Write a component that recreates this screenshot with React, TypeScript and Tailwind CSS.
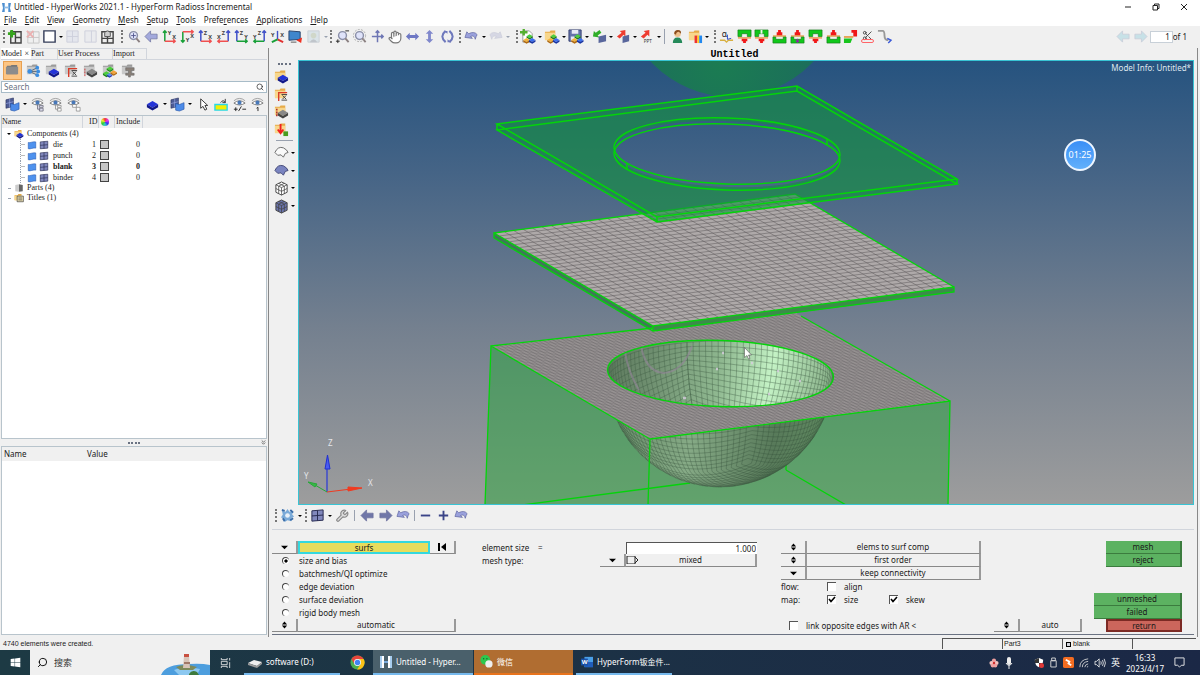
import React, { useState } from 'react';
import { FaWindows } from 'react-icons/fa';
import { LuSearch, LuHand, LuScissors, LuWrench, LuChevronsDown } from 'react-icons/lu';

type Kids = { children?: React.ReactNode };

/* ---------- small building blocks ---------- */

function Svg({ children, faded }: Kids & { faded?: boolean }) {
  return (
    <svg viewBox="0 0 16 16" className={`block h-[15px] w-[15px] overflow-visible ${faded ? 'opacity-30' : ''}`} fill="none">
      {children}
    </svg>
  );
}

function Tool({ label, children, faded }: Kids & { label: string; faded?: boolean }) {
  return (
    <button type="button" title={label} aria-label={label} className="flex shrink-0 items-center justify-center">
      <Svg faded={faded}>{children}</Svg>
    </button>
  );
}

const Caret = ({ faded }: { faded?: boolean }) => (
  <span className={`h-0 w-0 shrink-0 border-x-2 border-t-2 border-x-transparent ${faded ? 'border-t-gray-400' : 'border-t-black'}`} />
);

const Grip = () => <span className="h-[13px] shrink-0 border-l-2 border-dotted border-[#777]" />;

/* ---------- icon shapes ---------- */

const Folder = ({ gray }: { gray?: boolean }) => (
  <>
    <path d="M1 3h5l1-1.5h5V11H1z" fill={gray ? '#9b9b9b' : '#e6ab48'} />
    <path d="M1 4h11v8H1z" fill={gray ? '#c9c9c9' : '#f8d78c'} />
  </>
);

const Gem = ({ x = 0, y = 0, c = '#2434d8', d = '#11188a', s = 1 }) => (
  <g transform={`translate(${x} ${y}) scale(${s})`}>
    <path d="M0 4l5-3 5 3-5 3z" fill={c} />
    <path d="M0 4l5 3 5-3v2.5l-5 3-5-3z" fill={d} />
  </g>
);

const Trio = () => (
  <>
    <Gem x={7} y={5} s={0.65} c="#4ccf3c" d="#1c7a16" />
    <Gem x={3.5} y={9} s={0.7} c="#f4b43a" d="#b06a10" />
    <Gem x={9.5} y={9} s={0.7} c="#3b6ff0" d="#1632a0" />
  </>
);

const Sheets = () => (
  <>
    <path d="M1 3l8-2v9l-8 2z" fill="#4d5b94" stroke="#222b58" strokeWidth=".6" />
    <path d="M1 7l8-2M5 2v9" stroke="#9aa9e6" strokeWidth=".7" />
    <path d="M6 7l4 1 5-2v7l-5 2-4-1z" fill="#4d8be8" stroke="#1d4da0" strokeWidth=".6" />
  </>
);

const MeshTile = () => (
  <>
    <path d="M2 3l12-1v11L2 14z" fill="#8188bd" stroke="#24284e" />
    <path d="M8 2.5v11M2 8.5l12-1" stroke="#24284e" />
  </>
);

const Plate = () => <path d="M2 4c4 1 6-2 12-1v10c-5-1-8 2-12 1z" fill="#4f92ee" stroke="#1c4fa8" strokeWidth=".8" />;

const Scope = () => (
  <>
    <circle cx="8" cy="7" r="4.2" fill="#dfe3fa" stroke="#8a8fa8" strokeWidth="1.5" />
    <path d="M11 10l3.5 4" stroke="#8a7f80" strokeWidth="2" />
  </>
);

const Eye = () => (
  <>
    <path d="M2 6.5q6-5 12 0q-6 4-12 0z" fill="#fff" stroke="#777" />
    <circle cx="8" cy="6" r="2.2" fill="#4878b8" />
    <path d="M2 4q6-5 12 0" stroke="#888" strokeWidth=".8" />
  </>
);

const ArrowLeft = ({ c = '#a3a9dc' }) => <path d="M1 8l6-6v3.5h7v5H7V14z" fill={c} stroke="#666b98" strokeWidth=".7" />;
const ArrowRight = ({ c = '#a3a9dc' }) => <path d="M15 8L9 2v3.5H2v5h7V14z" fill={c} stroke="#666b98" strokeWidth=".7" />;
const Undo = () => <path d="M1 9l2-6 2 2q6-3 9 1l-1 2-1 3q-1-5-5-3l2 2z" fill="#9aa1dc" stroke="#5a609c" strokeWidth=".7" />;
const Redo = () => <path d="M15 9l-2-6-2 2q-6-3-9 1l1 2 1 3q1-5 5-3l-2 2z" fill="#9ba1c9" stroke="#777ca5" strokeWidth=".7" />;

interface AxesProps {
  v: string;
  h: string;
  vc: string;
  hc: string;
  flip?: boolean;
  down?: boolean;
}

function Axes({ v, h, vc, hc, flip, down }: AxesProps) {
  const x = flip ? 13 : 3;
  const y = down ? 3 : 13;
  const x2 = flip ? 2 : 14;
  const y2 = down ? 14 : 2;
  const a = flip ? 2 : -2;
  const b = down ? -2 : 2;
  return (
    <>
      <path d={`M${x} ${y}V${y2}M${x - 2} ${y2 + b}L${x} ${y2}L${x + 2} ${y2 + b}`} stroke={vc} strokeWidth="1.6" />
      <path d={`M${x} ${y}H${x2}M${x2 + a} ${y - 2}L${x2} ${y}L${x2 + a} ${y + 2}`} stroke={hc} strokeWidth="1.6" />
      <text x="6" y={down ? 14 : 6} fontSize="6" fontWeight="bold" fill="#444">{v}</text>
      <text x={flip ? 1 : 11} y={down ? 10 : 11} fontSize="6" fontWeight="bold" fill="#444">{h}</text>
    </>
  );
}

function Press({ kind }: { kind: 'top' | 'bottom' | 'split' | 'spark' | 'bend' }) {
  if (kind === 'bend') {
    return (
      <>
        <path d="M9 1h6v7h-4V4H9z" fill="#f01818" />
        <path d="M1 8.5h10" stroke="#e48a20" strokeWidth="1.5" />
        <path d="M1 10h9l-2 5H1z" fill="#19c51e" />
      </>
    );
  }
  const up = kind === 'top' || kind === 'split';
  return up ? (
    <>
      <path d="M1 1h14v7h-4V5H5v3H1z" fill="#10c81a" stroke="#167a18" strokeWidth=".7" />
      {kind === 'split' && <path d="M7 1h2v4H7z" fill="#f0f0f0" />}
      <path d="M1 9.5h14" stroke="#e48a20" strokeWidth="1.2" />
      <path d="M5 10.5h6V13H9.5v2h-3v-2H5z" fill="#f01818" />
    </>
  ) : (
    <>
      <path d="M6.5 1h3v2.500H11V7H5V3.500h1.500z" fill="#f01818" />
      <path d="M1 7.5h14" stroke="#e48a20" strokeWidth="1.2" />
      <path d="M1 8.5h3V11h8V8.500h3V15H1z" fill="#10c81a" stroke="#167a18" strokeWidth=".7" />
      {kind === 'spark' && <path d="M8 10l2 3-2 2-2-2z" fill="#8a28a0" />}
    </>
  );
}

const Cube = ({ fill = '#fff' }) => (
  <>
    <path d="M8 1l6 3v8l-6 3-6-3V4z" fill={fill} stroke="#444" />
    <path d="M2 4l6 3 6-3M8 7v8M2 8l6 3 6-3M5 2.500l6 3v8M11 2.500l-6 3v8" stroke="#444" strokeWidth=".8" />
  </>
);

const Person = () => (
  <>
    <path d="M3 15q0-6 5-6t5 6z" fill="#258a5a" />
    <circle cx="8" cy="5" r="3.5" fill="#efc08c" />
    <path d="M4.5 5q0-4 4-4t3 4l-2-2q-3 0-3 3z" fill="#8a4c1c" />
  </>
);

/* ---------- 3D scene ---------- */

type Pt = [number, number];

const lerp = (a: Pt, b: Pt, t: number): Pt => [a[0] + (b[0] - a[0]) * t, a[1] + (b[1] - a[1]) * t];

// grid lines over the quad left-back-right-front
function quadGrid(l: Pt, b: Pt, r: Pt, f: Pt, n: number) {
  let d = '';
  for (let i = 1; i < n; i++) {
    const t = i / n;
    const p = [lerp(l, b, t), lerp(f, r, t), lerp(l, f, t), lerp(b, r, t)].map(q => `${q[0].toFixed(1)} ${q[1].toFixed(1)}`);
    d += `M${p[0]}L${p[1]}M${p[2]}L${p[3]}`;
  }
  return d;
}

// mapped mesh on the lower half sphere; inside = far wall, otherwise near wall
function bowlMesh(inside: boolean) {
  const n = 28;
  const rad = Math.PI / 180;
  const az = 28 * rad;
  const faces = [
    (a: number, b: number) => [a, b, 1],
    (a: number, b: number) => [1, a, b],
    (a: number, b: number) => [-1, a, b],
    (a: number, b: number) => [a, 1, b],
    (a: number, b: number) => [a, -1, b],
  ];
  let d = '';
  faces.forEach(face => {
    for (let i = 0; i < n; i++) {
      for (let swap = 0; swap < 2; swap++) {
        let pen = false;
        for (let j = 0; j <= n; j++) {
          const u = Math.tan((-45 + (90 * i) / n) * rad);
          const w = Math.tan((-45 + (90 * j) / n) * rad);
          const [x, y, z] = swap ? face(w, u) : face(u, w);
          const len = Math.hypot(x, y, z);
          const X = (x * Math.cos(az) - y * Math.sin(az)) / len;
          const Y = (x * Math.sin(az) + y * Math.cos(az)) / len;
          const Z = z / len;
          const facing = 0.957 * Y - 0.29 * Z;
          const ok = Z >= 0 && (inside ? facing < 0 : facing >= 0);
          if (ok) {
            d += `${pen ? 'L' : 'M'}${(720 + 113 * X).toFixed(1)} ${(374 + 33 * Y + 108 * Z).toFixed(1)}`;
          }
          pen = ok;
        }
      }
    }
  });
  return d;
}

const BLANK_GRID = quadGrid([495, 233], [795, 194], [954, 287], [653, 326], 32);
const DIE_GRID = quadGrid([491, 346], [794, 312], [950, 401], [650, 439], 70);
const BOWL_IN = bowlMesh(true);
const BOWL_OUT = bowlMesh(false);

function Scene() {
  return (
    <svg viewBox="299 61 894 443" preserveAspectRatio="xMidYMid slice" className="block h-full w-full" fill="none">
      <defs>
        <linearGradient id="sky" x1="0" y1="0" x2="0" y2="1">
          <stop offset="0" stopColor="#26537f" />
          <stop offset=".25" stopColor="#456486" />
          <stop offset=".6" stopColor="#74808f" />
          <stop offset="1" stopColor="#9d9d9d" />
        </linearGradient>
        <linearGradient id="inner" x1="608" y1="350" x2="833" y2="390" gradientUnits="userSpaceOnUse">
          <stop offset="0" stopColor="#5c785c" />
          <stop offset=".2" stopColor="#6f8f70" />
          <stop offset=".5" stopColor="#8fb890" />
          <stop offset=".72" stopColor="#c4f2c5" />
          <stop offset="1" stopColor="#86ad86" />
        </linearGradient>
        <linearGradient id="outer" x1="620" y1="420" x2="825" y2="450" gradientUnits="userSpaceOnUse">
          <stop offset="0" stopColor="#6b906c" />
          <stop offset=".35" stopColor="#86aa86" />
          <stop offset=".75" stopColor="#587a5a" />
          <stop offset="1" stopColor="#5f8a60" />
        </linearGradient>
        <radialGradient id="punch" cx=".45" cy=".85" r=".5">
          <stop offset="0" stopColor="#1b7c52" />
          <stop offset="1" stopColor="#1c6b5c" />
        </radialGradient>
        <clipPath id="mouth"><ellipse cx="720.5" cy="373.5" rx="113" ry="33" transform="rotate(2 720.5 373.5)" /></clipPath>
        <clipPath id="below"><path d="M491 346L650 439L950 401V510H491z" /></clipPath>
      </defs>
      <rect x="0" y="0" width="1500" height="700" fill="#26537f" />
      <rect x="0" y="61" width="1500" height="444" fill="url(#sky)" />

      <circle cx="732" cy="-14" r="111" fill="url(#punch)" />

      {/* blank */}
      <path d="M494 233L653 326L954 287V292L653 331L494 238z" fill="#3d7a55" />
      <path d="M494 233L795 194L954 287L653 326z" fill="#aea9a9" />
      <path d={BLANK_GRID} stroke="#5b5759" strokeWidth=".5" />

      {/* die */}
      <path d="M491 346L650 439L950 401L948 505H485z" fill="#28a83c" fillOpacity=".5" />
      <path d="M522 505L690 483M786 470L846 505M786 465V470" stroke="#04d40a" strokeWidth="1.3" />
      <g clipPath="url(#below)">
        <circle cx="720" cy="374" r="113" fill="url(#outer)" />
        <path d={BOWL_OUT} stroke="#34503a" strokeWidth=".5" strokeOpacity=".65" />
      </g>
      <path d="M491 346L794 312L950 401L650 439z" fill="#a09b9b" />
      <path d={DIE_GRID} stroke="#5c595b" strokeWidth=".5" strokeOpacity=".7" />
      <g clipPath="url(#mouth)">
        <rect x="600" y="330" width="240" height="90" fill="url(#inner)" />
        <path d={BOWL_IN} stroke="#3e5a42" strokeWidth=".5" strokeOpacity=".75" />
        <path d="M641 345q4 26 22 28q20-1 29-27M625 352q3 20 14 38" stroke="#94869a" strokeWidth="2" strokeOpacity=".6" />
        <path d="M722 353h2M751 363h2M777 371h2M768 394h2M799 381h2M683 398h3M716 369h2" stroke="#d8cde0" strokeWidth="2.5" strokeOpacity=".8" />
      </g>
      <ellipse cx="720.5" cy="373.5" rx="113" ry="33" transform="rotate(2 720.5 373.5)" stroke="#04d40a" strokeWidth="1.3" />
      <path d="M485 505L491 346L650 439L648 505M650 439L950 401L948 505M491 346L653 328M801 316L950 401" stroke="#04d40a" strokeWidth="1.3" />

      {/* blank edges lie over the die */}
      <path d="M653 326L954 287V292L653 331z" fill="#3d8a4b" />
      <path d="M494 233L653 326L954 287V292L653 331L494 238zM494 233L795 194L954 287M653 326V331" stroke="#04d40a" strokeWidth="1.3" />

      {/* binder */}
      <path
        fillRule="evenodd"
        d="M497 124L797 86L957 179V184L657 222L497 130zM614 151a113 33 2 1 0 226 6a113 33 2 1 0 -226 -6z"
        fill="#14923f"
        fillOpacity=".62"
      />
      <path d="M497 124L797 86L957 179L657 217zM497 130L797 91L957 184L657 222zM497 124V130M797 86V91M957 179V184M657 217V222M627 164V169M827 139V145" stroke="#04d40a" strokeWidth="1.5" />
      <ellipse cx="727" cy="151" rx="113" ry="33" transform="rotate(2 727 151)" stroke="#04d40a" strokeWidth="1.5" />
      <ellipse cx="727" cy="157" rx="113" ry="33" transform="rotate(2 727 157)" stroke="#04d40a" strokeWidth="1.5" />

      {/* axis triad */}
      <path d="M327 492V460" stroke="#2838d8" strokeWidth="1.2" />
      <path d="M327.5 455l-2.5 14h5z" fill="#4a5cf0" stroke="#2030d0" />
      <path d="M327 492l24-3" stroke="#f03a20" />
      <path d="M362 488l-14-1v4z" fill="#f03a20" stroke="#f03a20" />
      <path d="M327 492l-12-7" stroke="#28a838" />
      <path d="M308 482l9 2-2 3z" fill="#38b848" stroke="#28a838" />
      <g fill="#e4e6ea" fontSize="8" fontFamily="Noto Sans, sans-serif">
        <text x="328" y="446">Z</text>
        <text x="304" y="479">Y</text>
        <text x="368" y="486">X</text>
      </g>

      {/* mouse pointer */}
      <path d="M744.5 347.5v10l2.500-2 1.500 3.500 1.500-.6-1.500-3.400h3z" fill="#fff" stroke="#555" strokeWidth=".6" />
    </svg>
  );
}

/* ---------- window head ---------- */

const MENUS: [string, string, string][] = [
  ['', 'F', 'ile'],
  ['', 'E', 'dit'],
  ['', 'V', 'iew'],
  ['', 'G', 'eometry'],
  ['', 'M', 'esh'],
  ['', 'S', 'etup'],
  ['', 'T', 'ools'],
  ['Prefe', 'r', 'ences'],
  ['', 'A', 'pplications'],
  ['', 'H', 'elp'],
];

function WindowHead() {
  return (
    <header className="bg-white">
      <div className="flex h-[14px] items-center pl-[2px]">
        <svg viewBox="0 0 10 10" className="mr-[3px] h-[9px] w-[9px]">
          <path d="M0 0h3q0 5 0 10H0q2-5 0-10z" fill="#4c8ed0" />
          <path d="M10 0H7q0 5 0 10h3q-2-5 0-10z" fill="#4c8ed0" />
          <path d="M2 4h6v2H2z" fill="#8fbce6" />
        </svg>
        <h1>Untitled - HyperWorks 2021.1 - HyperForm Radioss Incremental</h1>
        <div className="ml-auto flex gap-[20px] pr-[12px]">
          <button type="button" aria-label="Minimize">
            <svg viewBox="0 0 8 8" className="h-[8px] w-[8px]"><path d="M1 4h6" stroke="#222" /></svg>
          </button>
          <button type="button" aria-label="Restore">
            <svg viewBox="0 0 8 8" className="h-[8px] w-[8px]" fill="none" stroke="#222"><path d="M1 2.500h4.500V7H1zM2.500 2.500v-1.500h4.500v4.500h-1.500" /></svg>
          </button>
          <button type="button" aria-label="Close">
            <svg viewBox="0 0 8 8" className="h-[8px] w-[8px]" stroke="#222"><path d="M1 1l6 6M7 1l-6 6" /></svg>
          </button>
        </div>
      </div>
      <nav className="flex h-[12px] items-center gap-[8px] pl-[4px]">
        {MENUS.map(([pre, key, post]) => (
          <button type="button" key={key + post}>
            {pre}<span className="underline">{key}</span>{post}
          </button>
        ))}
      </nav>
    </header>
  );
}

function TopToolbar() {
  return (
    <div className="flex h-[22px] items-center pb-px">
      <div className="flex w-[115px] items-center justify-between pl-[3px]">
        <Grip />
        <Tool label="New page"><path d="M4 3h11v12H4zM9 9h6M9 3v12" fill="#eee" stroke="#444" strokeWidth="1.5" /><path d="M5 1v8M1 5h8" stroke="#35a51c" strokeWidth="3" /></Tool>
        <Tool label="Delete page" faded><path d="M3 3h12v12H3zM9 3v12M3 9h12" stroke="#666" /><path d="M2 2l7 7M9 2L2 9" stroke="#e02020" strokeWidth="2" /></Tool>
        <Tool label="Page layout"><path d="M2 2h12v12H2z" fill="#fff" stroke="#333c58" strokeWidth="1.5" /></Tool>
        <Caret />
        <Tool label="Swap" faded><path d="M2 2h12v12H2zM8 2v12M2 8h12" fill="#c9d0e8" stroke="#8088b0" /></Tool>
        <Tool label="Expand" faded><path d="M2 2h12v12H2zM9 2v12" fill="#dde0ea" stroke="#8088b0" /></Tool>
        <Tool label="Sync"><path d="M2 3h12v12H2zM8 3v12M2 10h12" fill="#eee" stroke="#444" strokeWidth="1.5" /><path d="M5 8V4q3-4 6 0v4z" fill="#ccc" stroke="#555" /></Tool>
      </div>
      <div className="ml-[6px] flex w-[207px] items-center justify-between">
        <Grip />
        <Tool label="Fit"><Scope /><path d="M8 4.500v5M5.500 7h5" stroke="#555a90" /></Tool>
        <Tool label="Previous view"><ArrowLeft /></Tool>
        <Tool label="XY top"><Axes v="Y" h="X" vc="#18a038" hc="#f05050" /></Tool>
        <Tool label="XY bottom"><Axes v="Y" h="X" vc="#18a038" hc="#f05050" down /></Tool>
        <Tool label="XZ left"><Axes v="Z" h="X" vc="#4050c8" hc="#f05050" /></Tool>
        <Tool label="XZ right"><Axes v="Z" h="X" vc="#4050c8" hc="#f05050" flip /></Tool>
        <Tool label="YZ front"><Axes v="Z" h="Y" vc="#4050c8" hc="#18a038" /></Tool>
        <Tool label="YZ rear"><Axes v="Z" h="Y" vc="#4050c8" hc="#18a038" flip /></Tool>
        <Tool label="Isometric">
          <path d="M8 11V2" stroke="#4050c8" strokeWidth="1.5" />
          <path d="M8 11l6 3" stroke="#e03030" strokeWidth="2" />
          <path d="M8 11l-6 3" stroke="#18a038" strokeWidth="2" />
          <text x="1" y="9" fontSize="6" fontWeight="bold" fill="#444">Y</text>
          <text x="11" y="9" fontSize="6" fontWeight="bold" fill="#444">X</text>
        </Tool>
        <Tool label="Screen"><path d="M1 2l12 1v8L1 12z" fill="#3f86cc" stroke="#27416a" /><path d="M15 9l-6 3 5 3z" fill="#f03020" /><path d="M3 14h6" stroke="#555" /></Tool>
        <Tool label="Image" faded><path d="M2 2h12v12H2z" fill="#a8c8d8" stroke="#789" /><circle cx="8" cy="7" r="3" fill="#88a070" /><path d="M4 14q4-6 8 0z" fill="#567" /></Tool>
        <Caret faded />
      </div>
      <div className="flex w-[127px] items-center justify-between pl-[2px]">
        <Grip />
        <Tool label="Zoom in out"><Scope /><path d="M1 13h4M3 11v4M11 2h4" stroke="#222" /></Tool>
        <Tool label="Circle zoom"><Scope /><circle cx="8" cy="7" r="6.5" stroke="#aaa" strokeDasharray="2 1.5" /></Tool>
        <Tool label="Centre"><path d="M8 2v12M2 8h12M6 4l2-2 2 2M12 6l2 2-2 2" stroke="#6e76b4" strokeWidth="1.6" /></Tool>
        <button type="button" aria-label="Pan" className="text-[14px] text-[#777]"><LuHand fill="#fff" /></button>
        <Tool label="Rotate left right"><path d="M1 8l4-4v2.500h6V4l4 4-4 4V9.500H5V12z" fill="#6e78c4" /></Tool>
        <Tool label="Rotate up down"><path d="M8 1l4 4H9.500v6H12l-4 4-4-4h2.500V5H4z" fill="#8088cc" /></Tool>
        <Tool label="Spin"><path d="M6 2q-7 6 0 12M10 14q7-6 0-12" stroke="#6e78bc" strokeWidth="2.2" /><path d="M4 2h4v3zM12 14H8v-3z" fill="#6e78bc" /></Tool>
      </div>
      <div className="ml-[4px] flex w-[51px] items-center justify-between">
        <Grip />
        <Tool label="Undo"><Undo /></Tool>
        <Caret />
        <Tool label="Redo" faded><Redo /></Tool>
        <Caret faded />
      </div>
      <div className="ml-[6px] flex w-[145px] items-center justify-between">
        <Grip />
        <Tool label="New model"><path d="M3 2h7l3 3v9H3z" fill="#fff" stroke="#999" /><path d="M4 0v7M0 3.500h8" stroke="#55b030" strokeWidth="2.5" /><Trio /></Tool>
        <Caret />
        <Tool label="Open model"><Folder /><Trio /></Tool>
        <Caret />
        <Tool label="Save model"><path d="M1 1h13v12H1z" fill="#6573aa" stroke="#333f70" /><path d="M4 1h7v4H4zM3 8h9v5H3z" fill="#e6e9f5" /><Trio /></Tool>
        <Caret />
        <Tool label="Import"><path d="M1 8l1-6 2 2 4-3 2 3-4 3 2 2z" fill="#2fae28" /><path d="M7 8l8-2v7l-8 2z" fill="#59669c" /></Tool>
        <Caret />
        <Tool label="Export"><path d="M10 1L4 2l2 2-5 4 3 2 4-4 2 2z" fill="#ee3c30" /><path d="M7 8l7-2v7l-7 2z" fill="#59669c" /></Tool>
        <Caret />
        <Tool label="Export PPT"><path d="M11 1L5 2l2 2-5 4 3 2 4-4 2 2z" fill="#ee3c30" /><text x="5" y="15" fontSize="5" fill="#333">PPT</text></Tool>
        <Caret />
      </div>
      <div className="ml-[3px] flex w-[45px] items-center justify-between border-l border-gray-400 pl-[5px]">
        <Tool label="User profile"><Person /></Tool>
        <Tool label="Load results"><Folder /><path d="M7 7h3v8H7z" fill="#e33" /><path d="M10 7h2v8h-2z" fill="#fc2" /><path d="M12 7h3v8h-3z" fill="#28e" /></Tool>
        <Caret />
      </div>
      <div className="ml-[5px] flex w-[178px] items-center justify-between">
        <Grip />
        <Tool label="Punch angle"><text x="3" y="8" fontSize="9" fill="#222">α</text><path d="M1 12h5l2 2 2-2h5" stroke="#d8b040" strokeWidth="1.5" /><path d="M9 6v5l4-1" stroke="#2848c8" /></Tool>
        <Tool label="Single action"><Press kind="top" /></Tool>
        <Tool label="Single action split"><Press kind="split" /></Tool>
        <Tool label="Double action"><Press kind="bottom" /></Tool>
        <Tool label="Double action spark"><Press kind="spark" /></Tool>
        <Tool label="Draw"><Press kind="top" /></Tool>
        <Tool label="Form"><Press kind="bottom" /></Tool>
        <Tool label="Bend"><Press kind="bend" /></Tool>
        <button type="button" aria-label="Trim" className="flex flex-col items-center text-[11px] text-[#444]">
          <LuScissors />
          <span className="-mt-[2px] h-[4px] w-[13px] rounded-full border border-red-400" />
        </button>
        <Tool label="Springback"><path d="M1 2h5q2 0 2 5t4 5" stroke="#999" strokeWidth="2" /><path d="M11 10l4 2-3 3" stroke="#3858d8" strokeWidth="1.5" /></Tool>
      </div>
      <div className="ml-auto flex items-center gap-[2px] pr-[13px]">
        <Tool label="Previous page" faded><ArrowLeft c="#6cc0d4" /></Tool>
        <Tool label="Next page" faded><ArrowRight c="#6cc0d4" /></Tool>
        <span className="flex items-center">
          <input aria-label="Page" defaultValue="1" className="h-[12px] w-[23px] border border-[#c8d0d8] bg-white pr-[2px] text-right" />
          of 1
        </span>
      </div>
    </div>
  );
}

/* ---------- model browser ---------- */

interface Comp {
  id: number;
  name: string;
  bold?: boolean;
}

const COMPONENTS: Comp[] = [
  { id: 1, name: 'die' },
  { id: 2, name: 'punch' },
  { id: 3, name: 'blank', bold: true },
  { id: 4, name: 'binder' },
];

const TreeIcon = ({ children }: Kids) => (
  <svg viewBox="0 0 16 16" className="block h-[10px] w-[10px] shrink-0" fill="none">{children}</svg>
);

function ModelTree() {
  return (
    <div className="min-h-0 flex-1 border border-[#b8c4cc] bg-white font-['Liberation_Serif',serif]">
      <table className="w-full table-fixed border-collapse text-left">
        <thead>
          <tr className="h-[12px] bg-[#f0f0f0]">
            <th className="w-[80px] border-r border-gray-300 font-normal">Name</th>
            <th className="w-[16px] border-r border-gray-300 text-right font-normal">ID</th>
            <th className="w-[16px] border-r border-gray-300" aria-label="Color">
              <span className="ml-[2px] block h-[8px] w-[8px] rounded-full bg-[conic-gradient(#e33,#e3e,#33e,#3cc,#3c3,#ee3,#e33)]" />
            </th>
            <th className="w-[28px] border-r border-gray-300 text-center font-normal">Include</th>
            <th />
          </tr>
        </thead>
        <tbody>
          <tr className="h-[11px]">
            <td colSpan={5}>
              <div className="flex items-center gap-[3px] pl-[5px]">
                <Caret />
                <TreeIcon><Folder /><Gem x={4} y={5} s={1.1} /></TreeIcon>
                Components (4)
              </div>
            </td>
          </tr>
          {COMPONENTS.map(c => (
            <tr key={c.id} className={`h-[11px] ${c.bold ? 'font-bold' : ''}`}>
              <td>
                <div className="flex items-center gap-[2px] pl-[18px]">
                  <span className="h-[11px] w-[5px] border-l border-dotted border-gray-400 bg-[linear-gradient(#bbb,#bbb)] bg-[length:5px_1px] bg-center bg-no-repeat" />
                  <TreeIcon><Plate /></TreeIcon>
                  <TreeIcon><MeshTile /></TreeIcon>
                  <span className="ml-[2px]">{c.name}</span>
                </div>
              </td>
              <td className="pr-[2px] text-right">{c.id}</td>
              <td><span className="ml-[2px] block h-[9px] w-[9px] border border-[#444] bg-[#c6c6c6]" /></td>
              <td className="pr-[2px] text-right">0</td>
              <td />
            </tr>
          ))}
          <tr className="h-[10px]">
            <td colSpan={5}>
              <div className="flex items-center gap-[3px] pl-[6px]">
                <span className="w-[3px] border-t border-gray-400" />
                <TreeIcon><path d="M2 3l6-1v12l-6-1z" fill="#ccc" /><path d="M8 2l6 1v10l-6 1z" fill="#666" /></TreeIcon>
                Parts (4)
              </div>
            </td>
          </tr>
          <tr className="h-[10px]">
            <td colSpan={5}>
              <div className="flex items-center gap-[3px] pl-[6px]">
                <span className="w-[3px] border-t border-gray-400" />
                <TreeIcon><Folder /><path d="M5 5h10v9H5z" fill="#e8dcb0" stroke="#333" /><path d="M7 8h6M7 11h6" stroke="#333" /></TreeIcon>
                Titles (1)
              </div>
            </td>
          </tr>
        </tbody>
      </table>
    </div>
  );
}

function Browser() {
  const [search, setSearch] = useState('');

  return (
    <aside className="flex w-[268px] shrink-0 flex-col pr-px pl-px">
      <div className="flex h-[11px] items-center font-['Liberation_Serif',serif]">
        <button type="button" className="flex h-full w-[30px] items-center justify-between bg-white pr-[2px]">
          Model <span>×</span>
        </button>
        <button type="button" className="h-full w-[26px] border-t border-gray-300 text-left">Part</button>
        <button type="button" className="h-full w-[55px] border-t border-l border-gray-300 text-left">User Process</button>
        <button type="button" className="h-full w-[35px] border-t border-x border-gray-300 text-left">Import</button>
      </div>
      <div className="flex h-[21px] items-center gap-[4px] border-t border-gray-300 pl-[2px]">
        <span className="border border-[#e8a050] bg-[#fdc583] p-px"><Tool label="Model view"><path d="M2 3h4l1-1h6v10H2z" fill="#777" /><path d="M1 4h13v8H1z" fill="#8c8c8c" /></Tool></span>
        <Tool label="Hierarchy"><Folder gray /><path d="M4 9l8-4M4 9l8 4M4 9h8" stroke="#567" /><circle cx="4" cy="9" r="2.5" fill="#3b8de0" /><circle cx="12" cy="5" r="2" fill="#3b8de0" /><circle cx="13" cy="9" r="2" fill="#3b8de0" /><circle cx="12" cy="13" r="2" fill="#3b8de0" /></Tool>
        <Tool label="Components"><Folder gray /><Gem x={4} y={5} s={1.1} /></Tool>
        <Tool label="Properties"><Folder gray /><path d="M5 15V6h9M5 6v3" stroke="#d83c28" strokeWidth="1.5" /><path d="M8 8h6M8 14h6M9 9l4 4M13 9l-4 4" stroke="#444" /></Tool>
        <Tool label="Materials"><Folder gray /><Gem x={4} y={5} s={1.1} c="#888" d="#444" /><path d="M2 6v8" stroke="#c33" strokeDasharray="2 1" /></Tool>
        <Tool label="Assemblies"><Folder gray /><Gem x={5} y={3} s={0.7} c="#4ccf3c" d="#1c8a16" /><Gem x={1} y={8} s={0.75} c="#4ccf3c" d="#1c8a16" /><Gem x={5} y={10} s={0.6} c="#5b8ff0" d="#2434b8" /><Gem x={9} y={7} s={0.7} c="#f4a43a" d="#b06a10" /></Tool>
        <Tool label="Load collectors"><Folder gray /><path d="M5 5h9v3h-3v3h3v2H10v2H8v-2H5v-2h3V8H5z" fill="#8a8078" stroke="#666" strokeWidth=".6" /></Tool>
      </div>
      <label className="mt-px flex h-[12px] items-center border border-[#a8bcc8] bg-white px-[2px]">
        <input
          type="text"
          aria-label="Search"
          placeholder="Search"
          value={search}
          onChange={e => setSearch(e.target.value)}
          className="min-w-0 flex-1 placeholder:text-gray-500 focus:outline-none"
        />
        <LuSearch className="text-[8px]" />
      </label>
      <div className="flex h-[22px] items-center">
        <div className="flex w-[80px] items-center justify-between pl-[4px]">
          <Tool label="Sheets"><Sheets /></Tool>
          <Caret />
          <Tool label="Show"><Eye /><path d="M8 8v5h3M10 9h4v2h-4zM10 12h4v3h-4z" fill="#dde" stroke="#667" strokeWidth=".8" /></Tool>
          <Tool label="Hide"><Eye /><path d="M8 8v5h3M10 9h4v2h-4zM10 12h4v3h-4z" fill="#fff" stroke="#888" strokeWidth=".8" /></Tool>
          <Tool label="Isolate"><Eye /><path d="M7 8h4v3H7zM11 11h4v4h-4z" fill="#fff" stroke="#888" strokeWidth=".8" /></Tool>
        </div>
        <div className="ml-auto flex w-[122px] items-center justify-between pr-[2px]">
          <Tool label="Component"><Gem x={2} y={3} s={1.2} /></Tool>
          <Caret />
          <Tool label="Surfaces"><Sheets /></Tool>
          <Caret />
          <Tool label="Select"><path d="M5 2v10l2.500-2 2 4 2-1-2-4h3z" fill="#fff" stroke="#333" /></Tool>
          <Tool label="Highlight"><path d="M1 8h13v6H1z" fill="#f6f000" stroke="#28d8e8" strokeWidth="1.5" /><path d="M7 6q3-4 5 0M12 2v4H9" stroke="#333" /></Tool>
          <Tool label="Add remove"><Eye /><path d="M2 13h4M4 11v4M10 10l-3 5M11 13h4" stroke="#222" /></Tool>
          <Tool label="Show one"><Eye /><path d="M7 12l1.500-1V15" stroke="#222" /></Tool>
        </div>
      </div>
      <ModelTree />
      <div className="grid h-[7px] grid-cols-3 items-center">
        <span className="col-start-2 w-[12px] justify-self-center border-t-2 border-dotted border-gray-500" />
        <LuChevronsDown className="justify-self-end text-[7px]" />
      </div>
      <div className="mb-[2px] h-[189px] border border-[#b8c4cc] bg-white">
        <div className="flex h-[14px] items-center bg-[#f0f0f0] pl-[2px]">
          <span className="w-[83px]">Name</span>
          <span>Value</span>
        </div>
      </div>
    </aside>
  );
}

/* ---------- graphics area ---------- */

function SideTools() {
  return (
    <div className="flex w-[26px] shrink-0 flex-col pl-[2px]">
      <span className="mt-[3px] mb-[4px] ml-[4px] w-[13px] border-t-2 border-dotted border-gray-500" />
      <div className="flex h-[68px] flex-col items-start justify-between">
        <Tool label="Components"><Folder /><Gem x={4} y={5} s={1.1} /></Tool>
        <Tool label="Properties"><Folder /><path d="M5 15V6h9" stroke="#d83c28" strokeWidth="1.5" /><path d="M8 8h6M8 14h6M9 9l4 4M13 9l-4 4" stroke="#444" /></Tool>
        <Tool label="Materials"><Folder /><Gem x={4} y={5} s={1.1} c="#888" d="#444" /><path d="M3 5v9" stroke="#a22" strokeDasharray="2 1" strokeWidth="1.5" /></Tool>
        <Tool label="Organize"><Folder /><path d="M7 2v9M4 8l3 4 3-4" stroke="#f02020" strokeWidth="2" /><path d="M10 10h5v5h-5z" fill="#4a9c20" /></Tool>
      </div>
      <hr className="my-[3px] ml-[2px] w-[17px] border-gray-400" />
      <div className="flex h-[71px] flex-col justify-around">
        <div className="flex items-center gap-[2px]"><Tool label="Wireframe geometry"><path d="M1 8q3-7 9-5q4 2 5 5l-3 1-2 4q-2-4-6-2z" fill="#fafafa" stroke="#666" /></Tool><Caret /></div>
        <div className="flex items-center gap-[2px]"><Tool label="Shaded geometry"><path d="M1 8q3-7 9-5q4 2 5 5l-3 1-2 4q-2-4-6-2z" fill="#7a84c0" stroke="#444a78" /></Tool><Caret /></div>
        <div className="flex items-center gap-[2px]"><Tool label="Wireframe elements"><Cube /></Tool><Caret /></div>
        <div className="flex items-center gap-[2px]"><Tool label="Shaded elements"><Cube fill="#6a74ac" /></Tool><Caret /></div>
      </div>
    </div>
  );
}

function BottomTools() {
  return (
    <div className="flex h-[24px] shrink-0 items-center gap-[3px] pb-[3px] pl-[3px]">
      <Grip />
      <Tool label="Visualization">
        <path d="M8 1l2 3 4-1-1 4 2 2-3 2v3l-4-1-3 2-1-4-3-1 2-3-1-4 4 1z" fill="#7aaad8" />
        <path d="M2 2l3 1M11 2l3 3M3 11l2 3M11 13l3-2" stroke="#3a6ca8" strokeWidth="2" />
        <circle cx="8" cy="8" r="2.5" fill="#e8f0f8" />
      </Tool>
      <Caret />
      <Grip />
      <Tool label="Mesh lines"><MeshTile /></Tool>
      <Caret />
      <button type="button" aria-label="Options" className="text-[14px] text-[#888]"><LuWrench fill="#ddd" /></button>
      <span className="mx-[2px] h-[11px] border-l border-gray-400" />
      <Tool label="Back"><ArrowLeft c="#7077a8" /></Tool>
      <Tool label="Forward"><ArrowRight c="#7077a8" /></Tool>
      <Tool label="Reset view"><Undo /></Tool>
      <span className="h-[11px] border-l border-gray-400" />
      <Tool label="Less"><path d="M3 8h10" stroke="#3a4488" strokeWidth="2" /></Tool>
      <Tool label="More"><path d="M3 8h10M8 3v10" stroke="#3a4488" strokeWidth="2" /></Tool>
      <Tool label="Restore"><Undo /></Tool>
    </div>
  );
}

/* ---------- automesh panel ---------- */

const raised = 'flex h-[13px] items-center justify-center border-r-2 border-b border-r-[#999] border-b-[#888] bg-[#f0f0f0]';

const DownBtn = ({ label }: { label: string }) => (
  <button type="button" aria-label={label} className={`${raised} w-[26px] shrink-0`}>
    <svg viewBox="0 0 8 8" className="h-[7px] w-[7px]"><path d="M0 2h8L4 6z" /></svg>
  </button>
);

const ToggleBtn = ({ label }: { label: string }) => (
  <button type="button" aria-label={label} className={`${raised} w-[26px] shrink-0`}>
    <svg viewBox="0 0 8 8" className="h-[8px] w-[7px]"><path d="M1 3.500L4 0l3 3.500zM1 4.500h6L4 8z" /></svg>
  </button>
);

function Check({ label, on }: { label: string; on?: boolean }) {
  return (
    <label className="flex h-[13px] items-center gap-[8px]">
      <span className="relative block h-[9px] w-[9px]">
        <input type="checkbox" defaultChecked={on} className="peer block h-[9px] w-[9px] appearance-none border-t border-l border-[#555] bg-white" />
        <svg viewBox="0 0 9 9" className="pointer-events-none absolute inset-0 hidden peer-checked:block" fill="none">
          <path d="M2 4l2 2.500L8 2" stroke="#000" strokeWidth="1.6" />
        </svg>
      </span>
      {label}
    </label>
  );
}

const MODES = ['size and bias', 'batchmesh/QI optimize', 'edge deviation', 'surface deviation', 'rigid body mesh'];

function MeshPanel() {
  const [mode, setMode] = useState(MODES[0]);
  const green = 'h-[13px] border-r-2 border-b border-[#3b7c3e] bg-[#5cb261] text-center';

  return (
    <section className="mr-[3px] flex shrink-0 border-t border-b border-t-gray-300 border-b-gray-500 pt-[11px] pb-[2px]">
      <div className="w-[184px] shrink-0">
        <div className="flex">
          <DownBtn label="Entity type" />
          <button type="button" className="h-[13px] flex-1 border-2 border-[#35d8de] bg-[#e8dc5c] leading-[9px]">surfs</button>
          <button type="button" aria-label="Reset selection" className={`${raised} w-[26px]`}>
            <svg viewBox="0 0 8 8" className="h-[8px] w-[8px]"><path d="M0 0h2v8H0zM8 0v8L3 4z" /></svg>
          </button>
        </div>
        {MODES.map(m => (
          <label key={m} className="flex h-[13px] items-center gap-[10px] pl-[10px]">
            <input
              type="radio"
              name="mode"
              checked={mode === m}
              onChange={() => setMode(m)}
              className="h-[7px] w-[7px] appearance-none rounded-full border-t border-l border-[#444] bg-white checked:bg-[radial-gradient(#000_35%,#fff_40%)]"
            />
            {m}
          </label>
        ))}
        <div className="flex">
          <ToggleBtn label="Mesh mode" />
          <button type="button" className={`${raised} flex-1`}>automatic</button>
        </div>
      </div>

      <div className="ml-[26px] w-[275px] shrink-0">
        <div className="flex h-[13px] items-center">
          <label htmlFor="size" className="w-[56px]">element size</label>
          <span>=</span>
          <input id="size" defaultValue="1.000" className="ml-auto h-[12px] w-[131px] border-t border-l border-[#555] bg-white pr-px text-right" />
        </div>
        <div className="flex h-[13px] items-center">
          <span>mesh type:</span>
          <div className="ml-auto flex w-[157px]">
            <DownBtn label="Mesh type" />
            <button type="button" className={`${raised} flex-1`}>
              <svg viewBox="0 0 14 8" className="h-[8px] w-[14px]" fill="none" stroke="#222"><path d="M1 0h8v8H1zM9 1l3 3-3 3" /></svg>
              <span className="flex-1 pr-[14px]">mixed</span>
            </button>
          </div>
        </div>
      </div>

      <div className="ml-[24px] w-[301px] shrink-0">
        <div className="w-[200px]">
          <div className="flex"><ToggleBtn label="Destination" /><button type="button" className={`${raised} flex-1`}>elems to surf comp</button></div>
          <div className="flex"><ToggleBtn label="Order" /><button type="button" className={`${raised} flex-1`}>first order</button></div>
          <div className="flex"><DownBtn label="Connectivity" /><button type="button" className={`${raised} flex-1`}>keep connectivity</button></div>
        </div>
        <div className="flex h-[13px] items-center">
          <span className="w-[46px]">flow:</span>
          <Check label="align" />
        </div>
        <div className="flex h-[13px] items-center">
          <span className="w-[46px]">map:</span>
          <span className="w-[62px]"><Check label="size" on /></span>
          <Check label="skew" on />
        </div>
        <div className="mt-[13px] flex h-[13px] items-center pl-[8px]">
          <Check label="link opposite edges with AR <" />
          <div className="ml-auto flex w-[88px]">
            <ToggleBtn label="Ratio" />
            <button type="button" className={`${raised} flex-1`}>auto</button>
          </div>
        </div>
      </div>

      <div className="mr-[12px] ml-auto flex w-[88px] flex-col items-end">
        <button type="button" className={`${green} w-[76px]`}>mesh</button>
        <button type="button" className={`${green} w-[76px]`}>reject</button>
        <button type="button" className={`${green} mt-[26px] w-full`}>unmeshed</button>
        <button type="button" className={`${green} w-full`}>failed</button>
        <button type="button" className="h-[13px] w-[76px] border-2 border-[#7c2a24] bg-[#cc665c] text-center leading-[9px]">return</button>
      </div>
    </section>
  );
}

/* ---------- bottom bars ---------- */

function StatusBar() {
  const cell = 'h-[11px] border-t border-l border-[#555] pl-px';
  return (
    <div className="flex h-[13px] shrink-0 items-center pl-[3px] font-['Liberation_Sans',sans-serif] text-[7px]">
      <span>4740 elements were created.</span>
      <div className="ml-auto flex pr-[4px]">
        <span className={`${cell} w-[60px]`} />
        <span className={`${cell} w-[60px]`}>Part3</span>
        <span className={`${cell} flex w-[70px] items-center gap-[2px]`}><i className="ml-[2px] h-[5px] w-[5px] border border-black bg-gray-300" />blank</span>
        <span className={`${cell} w-[64px]`} />
      </div>
    </div>
  );
}

function Taskbar() {
  return (
    <footer className="flex h-[25px] shrink-0 items-stretch bg-linear-to-r from-[#1d3a44] to-[#1b2846] text-white">
      <button type="button" aria-label="Start" className="flex w-[30px] items-center justify-center text-[11px]"><FaWindows /></button>
      <label className="flex w-[180px] items-center bg-[#f0f0f0] pl-[7px] text-black">
        <LuSearch className="-scale-x-100 text-[11px]" />
        <input aria-label="搜索" placeholder="搜索" className="ml-[6px] w-[90px] text-[9px] placeholder:text-[#333] focus:outline-none" />
        <svg viewBox="0 0 50 25" className="ml-auto h-[25px] w-[50px]">
          <path d="M1 25q4-11 28-11 12-1 21 1v10z" fill="#4d9ede" />
          <path d="M14 20q10-5 26-1l-3 6H19z" fill="#8cc8f0" />
          <path d="M16 17q9-4 21 0l-4 3H20z" fill="#7d8a5a" />
          <path d="M29 24q3-5 8-2l2 3h-10z" fill="#3d7a3c" />
          <path d="M24 6h5l1 12h-7z" fill="#d8c4b8" />
          <path d="M24 4h5v3h-5z" fill="#c85040" />
          <path d="M24 12h6v2h-6z" fill="#a07868" />
        </svg>
      </label>
      <button type="button" aria-label="Task view" className="flex w-[30px] items-center justify-center">
        <svg viewBox="0 0 12 12" className="h-[10px] w-[11px]" fill="none" stroke="#eee"><path d="M1 0v2h7V0M1 4h7v4H1zM1 12v-2h7v2M11 0v3M11 5v7" /></svg>
      </button>
      <button type="button" className="ml-[4px] flex w-[96px] items-center gap-[4px] border-b-2 border-[#76b9ed] pl-[4px]">
        <svg viewBox="0 0 14 8" className="mt-[4px] h-[8px] w-[14px]"><path d="M0 3l6-3 8 2-5 4z" fill="#eee" /><path d="M0 3l9 3 5-4v2L9 8 0 5z" fill="#999" /></svg>
        software (D:)
      </button>
      <button type="button" aria-label="Chrome" className="flex w-[33px] items-center justify-center pl-[2px]">
        <svg viewBox="0 0 16 16" className="h-[15px] w-[15px]">
          <circle cx="8" cy="8" r="7.5" fill="#4caf50" />
          <path d="M1.5 4.200A7.500 7.500 0 0 1 14.500 4.200H8L5 10z" fill="#e8453c" />
          <path d="M14.5 4.200A7.500 7.500 0 0 1 7.500 15.500L11.400 9.500 10 4.200z" fill="#fbc116" />
          <circle cx="8" cy="8" r="3.7" fill="#fff" />
          <circle cx="8" cy="8" r="2.9" fill="#4285f4" />
        </svg>
      </button>
      <button type="button" className="flex w-[100px] items-center gap-[4px] border-b-2 border-[#76b9ed] bg-[#4a606b] pl-[7px]">
        <svg viewBox="0 0 12 12" className="h-[12px] w-[12px]"><path d="M0 0h4v12H0zM8 0h4v12H8z" fill="#a8cdee" /><path d="M2 0h2v12H2zM8 0h2v12H8z" fill="#fff" /><path d="M4 5h4v2H4z" fill="#79aadb" /></svg>
        Untitled - Hyper...
      </button>
      <button type="button" className="ml-px flex w-[99px] items-center gap-[4px] border-b-2 border-[#e8731c] bg-[#b06d31] pl-[6px]">
        <svg viewBox="0 0 16 16" className="h-[13px] w-[13px]"><circle cx="6.5" cy="6" r="6" fill="#2dc84d" /><circle cx="11" cy="11" r="4.5" fill="#eee" /><circle cx="4.5" cy="4.5" r=".9" fill="#17652b" /><circle cx="8.5" cy="4.5" r=".9" fill="#17652b" /></svg>
        微信
      </button>
      <button type="button" className="ml-[3px] flex w-[96px] items-center gap-[4px] border-b-2 border-[#76b9ed] pl-[5px]">
        <svg viewBox="0 0 14 14" className="h-[12px] w-[12px]"><path d="M4 1h10v12H4z" fill="#4a9fe8" /><path d="M4 7h10v6H4z" fill="#1f5dbc" /><path d="M0 3h8v8H0z" fill="#1850a8" /><text x="1" y="9.5" fontSize="7" fontWeight="bold" fill="#fff">W</text></svg>
        HyperForm钣金件...
      </button>
      <div className="ml-auto flex items-center gap-[5px] pr-[15px]">
        <svg viewBox="0 0 12 12" className="h-[10px] w-[10px]"><circle cx="6" cy="3" r="2.5" fill="#f0a0a0" /><circle cx="3" cy="6" r="2.5" fill="#f4c4c0" /><circle cx="9" cy="6" r="2.5" fill="#f4c4c0" /><circle cx="4.5" cy="9" r="2.5" fill="#f0a0a0" /><circle cx="7.5" cy="9" r="2.5" fill="#f0a0a0" /><circle cx="6" cy="6" r="1.5" fill="#d03030" /></svg>
        <svg viewBox="0 0 10 12" className="mr-[15px] h-[12px] w-[10px]" fill="none"><rect x="3" y="0" width="4" height="8" rx="2" fill="#eee" /><path d="M5 9v3M2 6q3 5 6 0" stroke="#eee" /></svg>
        <svg viewBox="0 0 12 12" className="h-[10px] w-[10px]"><path d="M1 2l5-2 5 2q0 7-5 9-5-2-5-9z" fill="#fff" /><path d="M6 0v6H1V2zM6 6h5q-1 4-5 5z" fill="#333" /><circle cx="9" cy="9" r="3" fill="#e03838" /></svg>
        <svg viewBox="0 0 10 12" className="h-[11px] w-[9px]" fill="none" stroke="#ddd"><path d="M3 1h4v3H3zM2 4h6v7H2z" /></svg>
        <svg viewBox="0 0 12 12" className="h-[11px] w-[11px]"><rect width="12" height="12" rx="2" fill="#f36c21" /><path d="M3 3l4 2-1 2 3 2" stroke="#fff" strokeWidth="2" fill="none" /></svg>
        <svg viewBox="0 0 12 12" className="h-[10px] w-[10px]" fill="none" stroke="#ddd"><path d="M1 11Q1 2 11 1M4 11Q4 5 11 4M7 11q0-3 4-4M9.5 11l1.500-1" /></svg>
        <svg viewBox="0 0 14 12" className="h-[10px] w-[12px]" fill="none" stroke="#eee"><path d="M1 4h2l3-3v10L3 8H1zM8 4q1 2 0 4M10 2.500q2 3.500 0 7M12 1q3 5 0 10" /></svg>
        <span className="text-[9px]">英</span>
        <div className="w-[40px] text-center leading-[11px]">
          <div>16:33</div>
          <div>2023/4/17</div>
        </div>
        <svg viewBox="0 0 12 12" className="ml-[4px] h-[11px] w-[11px]" fill="none" stroke="#eee"><path d="M1 1h10v8H8l-2 2-2-2H1z" /></svg>
      </div>
    </footer>
  );
}

export default function App() {
  return (
    <div className="flex h-screen flex-col overflow-hidden bg-[#f0f0f0] font-['Noto_Sans','Noto_Sans_CJK_SC',sans-serif] text-[8px] leading-[10px] text-[#1a1a1a]">
      <WindowHead />
      <TopToolbar />
      <div className="flex min-h-0 flex-1">
        <Browser />
        <main className="mr-[2px] flex min-w-0 flex-1 flex-col border-r border-l border-[#888] pl-[3px]">
          <h2 className="h-[12px] text-center font-['Liberation_Mono',monospace] text-[10px] font-bold leading-[13px] text-black">Untitled</h2>
          <div className="mr-[3px] flex min-h-0 flex-1">
            <SideTools />
            <div className="relative min-w-0 flex-1 border border-[#38c4d4]">
              <Scene />
              <span className="absolute top-[2px] right-[2px] text-[#dfe6ee]">Model Info: Untitled*</span>
              <span className="absolute top-[78px] right-[97px] flex h-[32px] w-[32px] items-center justify-center rounded-full border-2 border-[#eef6ff] bg-linear-to-b from-[#3a8ff6] to-[#62b0fb] text-[9px] text-white">01:25</span>
            </div>
          </div>
          <BottomTools />
          <MeshPanel />
          <div className="h-[2px]" />
        </main>
      </div>
      <StatusBar />
      <Taskbar />
    </div>
  );
}
